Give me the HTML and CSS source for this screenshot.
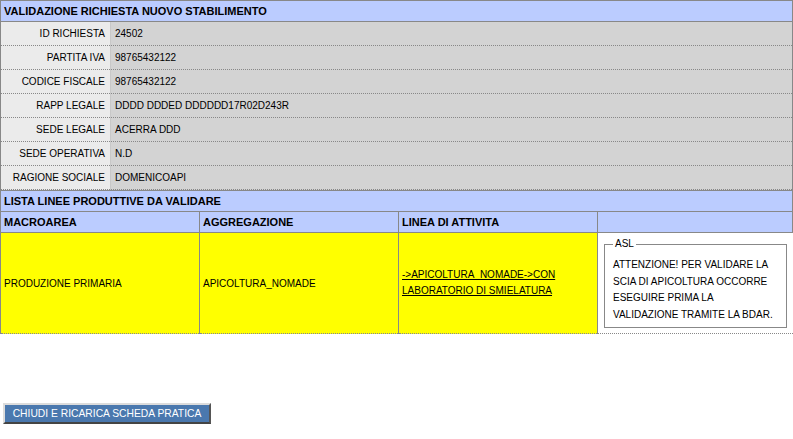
FILE: index.html
```html
<!DOCTYPE html>
<html>
<head>
<meta charset="utf-8">
<link rel="stylesheet" href="styles.css">
</head>
<body>
<table class="details">
  <colgroup><col class="w-label"><col></colgroup>
  <tr class="head"><th colspan="2">VALIDAZIONE RICHIESTA NUOVO STABILIMENTO</th></tr>
  <tr><td class="label">ID RICHIESTA</td><td class="value">24502</td></tr>
  <tr><td class="label">PARTITA IVA</td><td class="value">98765432122</td></tr>
  <tr><td class="label">CODICE FISCALE</td><td class="value">98765432122</td></tr>
  <tr><td class="label">RAPP LEGALE</td><td class="value">DDDD DDDED DDDDDD17R02D243R</td></tr>
  <tr><td class="label">SEDE LEGALE</td><td class="value">ACERRA DDD</td></tr>
  <tr><td class="label">SEDE OPERATIVA</td><td class="value">N.D</td></tr>
  <tr><td class="label">RAGIONE SOCIALE</td><td class="value">DOMENICOAPI</td></tr>
</table>
<table class="lines">
  <colgroup><col class="w-col"><col class="w-col"><col class="w-col"><col></colgroup>
  <tr class="head"><th colspan="4">LISTA LINEE PRODUTTIVE DA VALIDARE</th></tr>
  <tr class="cols">
    <th>MACROAREA</th>
    <th>AGGREGAZIONE</th>
    <th>LINEA DI ATTIVITA</th>
    <th></th>
  </tr>
  <tr class="item">
    <td class="yellow">PRODUZIONE PRIMARIA</td>
    <td class="yellow">APICOLTURA_NOMADE</td>
    <td class="yellow"><a href="#" class="link">-&gt;APICOLTURA_NOMADE-&gt;CON<br>LABORATORIO DI SMIELATURA</a></td>
    <td class="note-cell">
      <fieldset class="note">
        <legend>ASL</legend>
        ATTENZIONE! PER VALIDARE LA<br>SCIA DI APICOLTURA OCCORRE<br>ESEGUIRE PRIMA LA<br>VALIDAZIONE TRAMITE LA BDAR.
      </fieldset>
    </td>
  </tr>
</table>
<div class="actions">
  <button class="btn">CHIUDI E RICARICA SCHEDA PRATICA</button>
</div>
</body>
</html>
```
FILE: styles.css
```css
body {
  margin: 0;
  font-family: "Liberation Sans", Arial, sans-serif;
  font-size: 10px;
  color: #000;
  background: #fff;
}
table {
  width: 100%;
  border-collapse: collapse;
  table-layout: fixed;
}
.w-label { width: 110px; }
.w-col { width: 199px; }
.head th {
  background: #bbccff;
  border: 1px solid #888;
  text-align: left;
  font-weight: bold;
  font-size: 11px;
  padding: 0 3px;
  box-sizing: border-box;
  white-space: nowrap;
}
.details .head th {
  height: 21px;
}
.details td {
  height: 24px;
  box-sizing: border-box;
  border-bottom: 1px dotted #888;
  padding: 0 4px;
  white-space: nowrap;
}
.details .label {
  background: #ebebeb;
  text-align: right;
  border-left: 1px solid #888;
  border-right: 1px solid #c8c8c8;
  padding-right: 5px;
}
.details .value {
  background: #d3d3d3;
  border-right: 1px solid #888;
}
.lines .head th {
  height: 21px;
}
.cols th {
  background: #bbccff;
  border: 1px solid #888;
  border-top: none;
  text-align: left;
  font-size: 11px;
  height: 21px;
  padding: 0 3px;
  box-sizing: border-box;
}
.yellow {
  background: #ffff00;
  border-left: 1px solid #888;
  border-right: 1px solid #888;
  border-bottom: 1px dotted #888;
  padding: 0 3px;
  vertical-align: middle;
  white-space: nowrap;
}
.link {
  color: #000;
  text-decoration: underline;
  line-height: 16px;
}
.note-cell {
  border-bottom: 1px dotted #888;
  padding: 5px 6px 5px 6px;
  background: #fff;
}
.note {
  margin: 0;
  border: 1px solid #888;
  padding: 7px 8px 4px 8px;
  line-height: 16.5px;
  white-space: nowrap;
}
.note legend {
  padding: 0 2px;
  line-height: 12px;
}
.actions {
  padding: 69px 3px 0;
}
.btn {
  font-family: "Liberation Sans", Arial, sans-serif;
  font-size: 10.3px;
  color: #fff;
  background: #4a78ae;
  border: 2px solid;
  border-color: #dcdcdc #555 #444 #dcdcdc;
  padding: 0 7px;
  height: 21px;
  width: 208px;
  cursor: pointer;
}
```
